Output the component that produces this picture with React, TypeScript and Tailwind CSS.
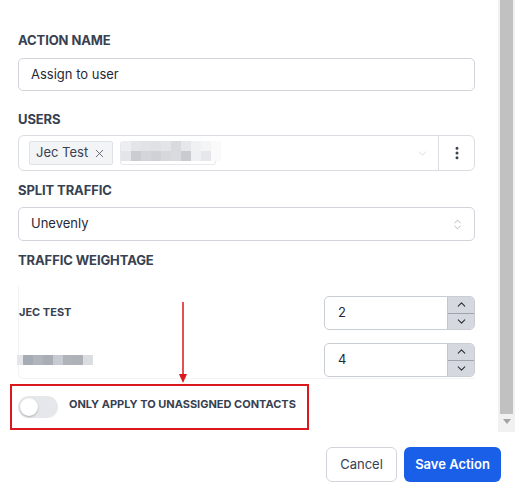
import { ChevronDown, ChevronUp, ChevronsUpDown, EllipsisVertical, X } from 'lucide-react';

const BLUR_TOP = ['#eceef1', '#e3e5e9', '#e1e3e7', '#dfe1e5', '#e2e4e8', '#d8dadf', '#e6e7ea', '#f0f1f3', '#f4f5f6', '#fafafa'];
const BLUR_BOTTOM = ['#e4e5e9', '#caccd2', '#d3d5da', '#cfd1d6', '#d6d8dc', '#d9dbdf', '#c8cbd0', '#eef0f2', '#e6e7ea', '#fafafa'];
const BLUR_NAME = ['#e4e5e8', '#a7abb3', '#b0b4bb', '#a9adb5', '#c7cad0', '#b0b3ba', '#aeb1b8', '#dcdde1'];

function Label({ children }: { children: string }) {
  return <div className="text-[13px] leading-4 font-bold text-[#374151] tracking-[-0.1px]">{children}</div>;
}

function NumberField({ value }: { value: string }) {
  return (
    <div className="w-[151px] h-[34px] flex border border-[#c9cdd4] rounded-[5px] overflow-hidden">
      <div className="flex-1 flex items-center pl-[13px] text-[13px] text-[#1f2937]">{value}</div>
      <div className="w-[27px] flex flex-col bg-[#d5d8de] border-l border-[#c2c6cd]">
        <div className="flex-1 flex items-center justify-center border-b border-[#9ea3ac]">
          <ChevronUp size={13} strokeWidth={2} className="text-[#2b2f36]" />
        </div>
        <div className="flex-1 flex items-center justify-center">
          <ChevronDown size={13} strokeWidth={2} className="text-[#2b2f36]" />
        </div>
      </div>
    </div>
  );
}

export default function App() {
  return (
    <div className="w-[515px] h-[496px] bg-white flex flex-col font-['Inter',sans-serif] overflow-hidden">
      <div className="h-[432px] flex">
        <div className="relative flex-1 pl-[18px] pr-[23px] pt-[32px]">
          <Label>ACTION NAME</Label>
          <div className="mt-[10px] h-[33px] border border-[#d1d5db] rounded-[5px] flex items-center pl-[12px] text-[13px] text-[#1f2937]">
            Assign to user
          </div>

          <div className="mt-[20px]">
            <Label>USERS</Label>
          </div>
          <div className="mt-[8px] h-[36px] border border-[#d9dce1] rounded-[6px] flex items-center">
            <div className="flex-1 flex items-center pl-[10px] gap-[7px]">
              <div className="h-[24px] flex items-center gap-[5px] px-[6px] bg-[#f3f4f6] border border-[#dfe2e6] rounded-[2px] text-[13px] text-[#374151]">
                Jec Test
                <X size={13} strokeWidth={1.5} className="text-[#4b5563]" />
              </div>
              <div className="relative h-[24px] w-[96px] border border-[#e5e7eb] rounded-[3px]">
                <div className="absolute left-[0px] top-[-1px] flex flex-col">
                  <div className="flex">
                    {BLUR_TOP.map((c, i) => (
                      <div key={i} className="w-[10px] h-[10px]" style={{ backgroundColor: c }} />
                    ))}
                  </div>
                  <div className="flex">
                    {BLUR_BOTTOM.map((c, i) => (
                      <div key={i} className="w-[10px] h-[10px]" style={{ backgroundColor: c }} />
                    ))}
                  </div>
                </div>
              </div>
            </div>
            <ChevronDown size={13} strokeWidth={1.2} className="text-[#c5c8cd] mr-[9px]" />
            <div className="w-[36px] h-full border-l border-[#d9dce1] flex items-center justify-center">
              <EllipsisVertical size={16} strokeWidth={2.5} className="text-[#374151]" />
            </div>
          </div>

          <div className="mt-[11px]">
            <Label>SPLIT TRAFFIC</Label>
          </div>
          <div className="mt-[9px] h-[34px] border border-[#d1d5db] rounded-[5px] flex items-center justify-between pl-[12px] pr-[10px] text-[13px] text-[#1f2937]">
            Unevenly
            <ChevronsUpDown size={13} strokeWidth={1.4} className="text-[#9ca3af]" />
          </div>

          <div className="mt-[11px]">
            <Label>TRAFFIC WEIGHTAGE</Label>
          </div>

          <div className="mt-[18px] pt-[10px] flex flex-col gap-[13px] border-l border-b border-[#f2f3f5] rounded-bl-[6px] pb-[1px]">
            <div className="flex items-center justify-between">
              <div className="text-[11px] font-bold text-[#374151] -mt-[2px]">JEC TEST</div>
              <NumberField value="2" />
            </div>
            <div className="flex items-center justify-between">
              <div className="flex -ml-[2px]">
                {BLUR_NAME.map((c, i) => (
                  <div key={i} className={i === 0 ? 'w-[6px] h-[10px]' : 'w-[10px] h-[10px]'} style={{ backgroundColor: c }} />
                ))}
              </div>
              <NumberField value="4" />
            </div>
          </div>

          <div className="mt-[5px] -ml-[8px] w-[299px] h-[46px] border-2 border-[#d9191c] flex items-center pl-[6px] gap-[11px]">
            <div className="w-[40px] h-[22px] rounded-full bg-[#e5e7eb] flex items-center px-[2px]">
              <div className="w-[18px] h-[18px] rounded-full bg-white shadow-[0_1px_2px_rgba(0,0,0,0.25)]" />
            </div>
            <div className="text-[11px] font-bold text-[#374151] -mt-[5px]">ONLY APPLY TO UNASSIGNED CONTACTS</div>
          </div>

          <svg className="absolute left-[178px] top-[302px]" width="10" height="82" viewBox="0 0 10 82">
            <line x1="5" y1="0" x2="5" y2="74" stroke="#d9191c" strokeWidth="1.5" />
            <polygon points="1,72 9,72 5,81" fill="#d9191c" />
          </svg>
        </div>

        <div className="w-[17px] bg-[#f1f1f1] flex flex-col pl-[2px] pr-[2px]">
          <div className="h-[414px] bg-[#c1c1c1]" />
          <div className="flex justify-center pt-[5px]">
            <svg width="8" height="5" viewBox="0 0 8 5">
              <polygon points="0,0 8,0 4,5" fill="#a3a3a3" />
            </svg>
          </div>
        </div>
      </div>

      <div className="flex justify-end gap-[7px] pr-[14px] pt-[15px]">
        <button className="w-[71px] h-[35px] border border-[#d1d5db] rounded-[6px] text-[13px] text-[#374151] bg-white">
          Cancel
        </button>
        <button className="w-[97px] h-[35px] rounded-[6px] text-[13px] font-semibold text-white bg-[#1a5fe8]">
          Save Action
        </button>
      </div>
    </div>
  );
}
